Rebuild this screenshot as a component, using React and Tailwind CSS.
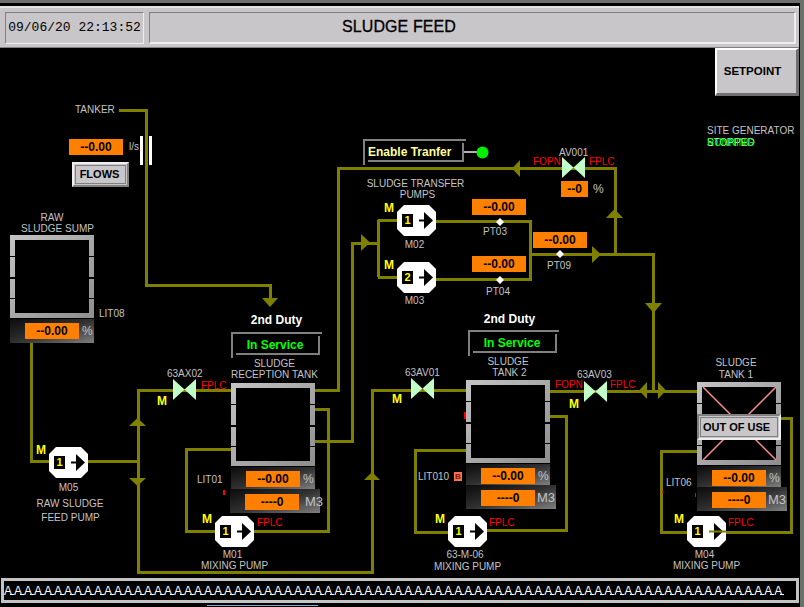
import React from 'react'

const OLIVE = '#808000'

// pipe runs, in page coordinates
const PIPES = [
  'M119 110H146V285H270V298',
  'M31 343V461H138',
  'M232 390H138V572H372V390H466',
  'M315 390H338V168H615V254',
  'M315 409H328V531H254',
  'M315 441H352V243H378',
  'M378 220V277M378 220H398M378 277H398',
  'M436 221H530V279H436',
  'M530 254H653V391',
  'M550 391H697',
  'M232 449H186V531H215',
  'M466 450H415V532H448',
  'M550 416H566V530H487',
  'M697 451H661V532H687',
  'M709 532H791V418H781',
]

const ARROWS = [
  '262,298 278,298 270,307',
  '129,426 146,426 137.5,418',
  '129,478 146,478 137.5,486',
  '364,480 380,480 372,472',
  '361,234 361,251 370,242.5',
  '520,160 520,177 512,168.5',
  '606,218 623,218 614.5,209',
  '592,246 592,263 601,254.5',
  '645,303 662,303 653.5,313',
  '647,382 647,399 639,390.5',
  '658,382 658,399 666,390.5',
]

const Label = ({ className = '', children }) => (
  <span
    className={`whitespace-nowrap text-[10px] leading-[11px] text-[#c4c4c4] ${className}`}
  >
    {children}
  </span>
)

const Tag = ({ className, children }) => <Label className={`absolute ${className}`}>{children}</Label>

const Red = ({ className, children }) => (
  <span
    className={`absolute whitespace-nowrap text-[10px] leading-[11px] text-[#ff0000] ${className}`}
  >
    {children}
  </span>
)

const ManualTag = ({ className }) => (
  <span
    className={`absolute text-[12px] leading-[12px] font-bold text-[#ffff00] ${className}`}
  >
    M
  </span>
)

const Value = ({ className = 'w-[54px]', children }) => (
  <div
    className={`h-[16px] shrink-0 bg-[#ff8000] flex items-center justify-center text-[12px] leading-[16px] font-bold text-black ${className}`}
  >
    {children}
  </div>
)

// value box over a pressure point: the diamond sits on the pipe drawing
const Reading = ({ className, labelClass, label }) => (
  <div className={`absolute flex flex-col items-center ${className}`}>
    <Value>--0.00</Value>
    <Label className={labelClass}>{label}</Label>
  </div>
)

const Pump = ({ className, num = 1, through = false, children }) => (
  <div className={`absolute w-[39px] flex flex-col items-center ${className}`}>
    <div className="relative w-[39px] h-[31px]">
      <svg width="39" height="31" viewBox="0 0 39 31" className="block">
        <polygon points="7,0 32,0 39,7 39,24 32,31 7,31 0,24 0,7" fill="#fff" />
        <rect x="5" y="9" width="11" height="13" fill="#000" />
        {!through && <rect x="22" y="14.5" width="6" height="2" fill="#000" />}
        <polygon points="27,7 36,15.5 27,24" fill="#000" />
        {through && <rect x="22" y="14.5" width="17" height="2" fill={OLIVE} />}
      </svg>
      <span className="absolute left-[5px] top-[9px] w-[11px] h-[13px] flex items-center justify-center text-[11px] leading-[13px] font-bold text-[#ffff00]">
        {num}
      </span>
      <ManualTag className="left-[-13px] top-[-3px]" />
    </div>
    {children}
  </div>
)

const Valve = ({ className }) => (
  <svg
    width="23"
    height="21"
    viewBox="0 0 23 21"
    className={`absolute ${className}`}
  >
    <polygon points="0,0 11.5,10.5 0,21" fill="#c0ffc8" />
    <polygon points="23,0 11.5,10.5 23,21" fill="#c0ffc8" />
  </svg>
)

const Tank = ({ crossed = false, children }) => (
  <div className="relative w-[84px] h-[83px] p-[5px] bg-linear-to-br from-[#c4c4c4] to-[#8e8e8e]">
    <div className="w-full h-full bg-black" />
    <div className="absolute left-0 top-[21px] w-[5px] h-px bg-black" />
    <div className="absolute left-0 top-[42px] w-[5px] h-[2px] bg-black" />
    <div className="absolute left-0 top-[63px] w-[5px] h-px bg-black" />
    <div className="absolute right-0 top-[21px] w-[5px] h-px bg-black" />
    <div className="absolute right-0 top-[42px] w-[5px] h-[2px] bg-black" />
    <div className="absolute right-0 top-[63px] w-[5px] h-px bg-black" />
    {crossed && (
      <svg width="84" height="83" viewBox="0 0 84 83" className="absolute left-0 top-0">
        <path d="M6 5L79 78M79 5L6 78" stroke="#ff8c8c" strokeWidth="1.5" />
      </svg>
    )}
    {children}
  </div>
)

const Gauge = ({ className, value, unit, unitClass = 'ml-[3px] mt-[3px] text-[12px]' }) => (
  <div
    className={`flex items-start pl-[15px] bg-linear-to-br from-[#0c0c0c] via-[#303030] to-[#808080] ${className}`}
  >
    <Value>{value}</Value>
    <Label className={unitClass}>{unit}</Label>
  </div>
)

const M3_CLASS = 'text-[13px] leading-[16px] text-[#a8a8a8]'

const Sunken = ({ className = '', textClass, children }) => (
  <div
    className={`relative h-[26px] border-t-2 border-l-2 border-[#808080] ${className}`}
  >
    <div
      className={`absolute left-[3px] top-[2px] right-[2px] bottom-[3px] border-r-2 border-b-2 border-[#808080] flex items-center text-[12px] font-bold ${textClass}`}
    >
      {children}
    </div>
  </div>
)

const Raised = ({ className, children }) => (
  <div
    className={`absolute flex items-center justify-center bg-[#c8c6c8] font-bold text-black ${className}`}
  >
    {children}
  </div>
)

export default function App() {
  return (
    <div
      className="relative w-[804px] h-[607px] overflow-hidden bg-black flex flex-col"
      style={{ fontFamily: '"Liberation Sans", Arial, sans-serif' }}
    >
      {/* header */}
      <div className="h-[3px] bg-[#6e6e6e]" />
      <div className="h-[3px]" />
      <div className="w-[799px] h-[42px] bg-[#c8c6c8] border-t-2 border-t-[#e4e4e4] border-b border-b-[#808080] flex items-center gap-[5px] pl-[5px] pr-[3px]">
        <div
          className="w-[139px] h-[32px] border-t border-l border-t-[#808080] border-l-[#808080] border-b border-r border-b-[#eeeeee] border-r-[#eeeeee] flex items-center justify-center text-[13px] text-black"
          style={{ fontFamily: '"Liberation Mono", monospace' }}
        >
          09/06/20 22:13:52
        </div>
        <div className="flex-1 h-[32px] pr-[146px] border-t border-l border-t-[#808080] border-l-[#808080] border-b-2 border-r-2 border-b-[#eeeeee] border-r-[#eeeeee] flex items-center justify-center text-[16px] tracking-[0.1px] [-webkit-text-stroke:0.3px_black] text-black">
          SLUDGE FEED
        </div>
      </div>

      {/* process mimic, placed on a free canvas */}
      <div className="flex-1" />
      <div className="absolute inset-0">
        <svg width="804" height="607" viewBox="0 0 804 607" className="absolute left-0 top-0">
          {PIPES.map(d => (
            <path
              key={d}
              d={d}
              fill="none"
              stroke={OLIVE}
              strokeWidth="3"
              shapeRendering="crispEdges"
            />
          ))}
          {ARROWS.map(p => (
            <polygon key={p} points={p} fill={OLIVE} />
          ))}
          <path d="M464 152H477" stroke="#b0b0b0" strokeWidth="2" />
          <circle cx="482.5" cy="152.5" r="6" fill="#00f000" />
          <g fill="#fff">
            <polygon points="500,218 504,222 500,226 496,222" />
            <polygon points="500,276 504,280 500,284 496,280" />
            <polygon points="560,250 564,254 560,258 556,254" />
          </g>
        </svg>

        {/* setpoint */}
        <Raised className="left-[715px] top-[48px] w-[84px] h-[48px] pr-[8px] text-[11.5px] border-t-2 border-l-2 border-t-white border-l-white border-b-[3px] border-r-[3px] border-b-[#707070] border-r-[#707070]">
          SETPOINT
        </Raised>
        <Tag className="left-[707px] top-[125px]">SITE GENERATOR</Tag>
        <span className="absolute left-[707px] top-[137px] whitespace-nowrap text-[10px] leading-[11px] text-[#b8ffb8]">
          STOPPED
        </span>
        <span className="absolute left-[707px] top-[137px] whitespace-nowrap text-[10px] leading-[11px] text-[#00ff00]">
          RUNNING
        </span>

        {/* tanker */}
        <Tag className="left-[75px] top-[104px]">TANKER</Tag>
        <div className="absolute left-[69px] top-[136px] flex items-start">
          <Value className="w-[54px] mt-[3px]">--0.00</Value>
          <Label className="ml-[6px] mt-[5px] w-[11px]">l/s</Label>
          <div className="w-[3px] h-[29px] bg-white" />
          <div className="ml-[6px] w-[3px] h-[29px] bg-white" />
        </div>
        <Raised className="left-[72px] top-[162px] w-[57px] h-[25px] pr-[2px] text-[11px] border-2 border-t-[#eeeeee] border-l-[#eeeeee] border-b-[#808080] border-r-[#808080] outline outline-[#808080] -outline-offset-4">
          FLOWS
        </Raised>

        {/* raw sludge sump */}
        <div className="absolute left-[10px] top-[212px] flex flex-col">
          <div className="flex flex-col items-center mb-px">
            <Label>RAW</Label>
            <Label className="pl-[11px]">SLUDGE SUMP</Label>
          </div>
          <Tank />
          <Gauge className="mt-px w-[84px] h-[24px] pt-[4px]" value="--0.00" unit="%" />
        </div>
        <Tag className="left-[99px] top-[308px]">LIT08</Tag>
        <Pump className="left-[49px] top-[447px]">
          <Label className="mt-[4px]">M05</Label>
          <Label className="mt-[5px] pl-[3px]">RAW SLUDGE</Label>
          <Label className="mt-[3px] pl-[4px]">FEED PUMP</Label>
        </Pump>

        {/* transfer line */}
        <div className="absolute left-[363px] top-[139px] w-[103px]">
          <Sunken textClass="text-[#ffff99]">Enable Tranfer</Sunken>
        </div>
        <div className="absolute left-[367px] top-[178px] w-[97px] flex flex-col items-center">
          <Label className="leading-[10px]">SLUDGE TRANSFER</Label>
          <Label className="leading-[10px] pl-[4px]">PUMPS</Label>
        </div>
        <Tag className="left-[559px] top-[147px]">AV001</Tag>
        <Red className="left-[533px] top-[156px]">FOPN</Red>
        <Red className="left-[589px] top-[156px]">FPLC</Red>
        <Valve className="left-[562px] top-[157px]" />
        <div className="absolute left-[561px] top-[181px] flex items-start gap-[5px]">
          <Value className="w-[27px]">--0</Value>
          <Label className="mt-[3px] text-[12px]">%</Label>
        </div>

        <Pump className="left-[397px] top-[205px]">
          <Label className="mt-[3px] pr-[4px]">M02</Label>
        </Pump>
        <Pump className="left-[397px] top-[262px]" num={2}>
          <Label className="mt-[2px] pr-[4px]">M03</Label>
        </Pump>

        <Reading className="left-[472px] top-[199px]" labelClass="mt-[11px] pr-[8px]" label="PT03" />
        <Reading className="left-[472px] top-[256px]" labelClass="mt-[14px] pr-[2px]" label="PT04" />
        <Reading className="left-[533px] top-[232px]" labelClass="mt-[12px] pr-[2px]" label="PT09" />

        {/* reception tank */}
        <div className="absolute left-[231px] top-[313px] w-[91px] flex flex-col items-center gap-[5px]">
          <span className="text-[12px] leading-[14px] font-bold text-white">2nd Duty</span>
          <Sunken className="w-full" textClass="text-[#00ff00] justify-center pr-[4px]">
            In Service
          </Sunken>
        </div>
        <div className="absolute left-[231px] top-[358px] flex flex-col">
          <div className="flex flex-col items-center mb-[3px] pr-[4px]">
            <Label className="leading-[10px]">SLUDGE</Label>
            <Label className="leading-[10px]">RECEPTION TANK</Label>
          </div>
          <Tank />
          <Gauge className="mt-px w-[84px] h-[22px] pt-[4px]" value="--0.00" unit="%" />
          <Gauge className="-ml-px w-[90px] h-[24px] pt-[5px]" value="----0" unit="M3" unitClass={`ml-[6px] ${M3_CLASS}`} />
        </div>
        <Tag className="left-[167px] top-[368px]">63AX02</Tag>
        <Red className="left-[201px] top-[380px]">FPLC</Red>
        <Valve className="left-[173px] top-[379px]" />
        <ManualTag className="left-[157px] top-[395px]" />
        <Tag className="left-[197px] top-[474px]">LIT01</Tag>
        <div className="absolute left-[223px] top-[490px] w-[2px] h-[5px] bg-[#ff0000]" />
        <Pump className="left-[215px] top-[516px]">
          <Label className="mt-[2px] pr-[4px]">M01</Label>
          <Label>MIXING PUMP</Label>
        </Pump>
        <Red className="left-[257px] top-[517px]">FPLC</Red>

        {/* tank 2 */}
        <div className="absolute left-[468px] top-[312px] w-[91px] flex flex-col items-center gap-[4px]">
          <span className="pr-[8px] text-[12px] leading-[14px] font-bold text-white">2nd Duty</span>
          <Sunken className="w-full" textClass="text-[#00ff00] justify-center pr-[4px]">
            In Service
          </Sunken>
        </div>
        <div className="absolute left-[466px] top-[356px] flex flex-col">
          <div className="flex flex-col items-center mb-[2px] pr-[6px]">
            <Label>SLUDGE</Label>
            <Label className="pl-[3px]">TANK 2</Label>
          </div>
          <Tank />
          <Gauge className="mt-px w-[84px] h-[21px] pt-[4px]" value="--0.00" unit="%" />
          <Gauge className="w-[90px] h-[24px] pt-[5px]" value="----0" unit="M3" unitClass={`ml-[2px] ${M3_CLASS}`} />
        </div>
        <div className="absolute left-[464px] top-[412px] w-[2px] h-[7px] bg-[#ff0000]" />
        <Tag className="left-[405px] top-[367px]">63AV01</Tag>
        <Valve className="left-[411px] top-[378px]" />
        <ManualTag className="left-[392px] top-[393px]" />
        <Red className="left-[555px] top-[379px]">FOPN</Red>
        <Tag className="left-[577px] top-[369px]">63AV03</Tag>
        <Valve className="left-[584px] top-[381px]" />
        <ManualTag className="left-[569px] top-[398px]" />
        <Red className="left-[610px] top-[379px]">FPLC</Red>
        <Tag className="left-[418px] top-[471px]">LIT010</Tag>
        <span className="absolute left-[454px] top-[472px] w-[8px] h-[9px] bg-[#ff7050] flex items-center justify-center text-[8px] leading-[9px] font-bold text-[#702010]">
          B
        </span>
        <Pump className="left-[448px] top-[516px]">
          <Label className="mt-[2px] pr-[5px]">63-M-06</Label>
          <Label className="mt-px">MIXING PUMP</Label>
        </Pump>
        <Red className="left-[489px] top-[517px]">FPLC</Red>

        {/* tank 1, out of use */}
        <div className="absolute left-[697px] top-[357px] flex flex-col">
          <div className="flex flex-col items-center mb-px pr-[12px]">
            <Label className="leading-[12px]">SLUDGE</Label>
            <Label className="leading-[12px]">TANK 1</Label>
          </div>
          <Tank crossed />
          <Gauge className="mt-px w-[84px] h-[21px] pt-[4px]" value="--0.00" unit="%" />
          <Gauge className="w-[90px] h-[24px] pt-[5px]" value="----0" unit="M3" unitClass={`ml-[2px] ${M3_CLASS}`} />
        </div>
        <Raised className="left-[697px] top-[414px] w-[84px] h-[26px] pr-[5px] text-[11px] border-2 border-t-[#808080] border-l-[#808080] border-b-[#eeeeee] border-r-[#eeeeee] outline outline-[#808080] -outline-offset-4">
          OUT OF USE
        </Raised>
        <Tag className="left-[666px] top-[477px]">LIT06</Tag>
        <div className="absolute left-[662px] top-[491px] w-px h-[2px] bg-[#ff0000]" />
        <div className="absolute left-[695px] top-[493px] w-px h-[4px] bg-[#ff0000]" />
        <Pump className="left-[687px] top-[516px]" through>
          <Label className="mt-[2px] pr-[4px]">M04</Label>
          <Label>MIXING PUMP</Label>
        </Pump>
        <Red className="left-[728px] top-[517px]">FPLC</Red>
      </div>

      {/* alarm banner */}
      <div className="relative ml-px w-[798px] h-[25px] border-[3px] border-[#c4c4c4] flex items-center overflow-hidden mb-[4px]">
        <span className="whitespace-nowrap text-[12px] leading-[14px] tracking-[2px] text-white">
          {'A'.repeat(78)}
        </span>
        <div className="absolute left-[6px] top-[13px] w-[776px] h-px bg-[repeating-linear-gradient(90deg,#fff_0,#fff_4px,transparent_4px,transparent_10px)]" />
      </div>
      <div className="absolute left-[207px] top-[605px] w-[111px] h-px bg-[#90a8d0]" />
      <div className="absolute right-0 top-0 w-[4px] h-full bg-[#6a706a]" />
    </div>
  )
}
